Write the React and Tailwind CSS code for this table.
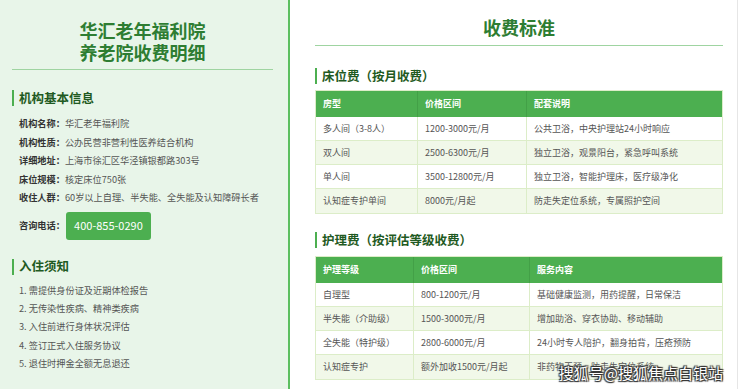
import React from 'react';

const info = [
  ['机构名称：', '华汇老年福利院'],
  ['机构性质：', '公办民营非营利性医养结合机构'],
  ['详细地址：', '上海市徐汇区华泾镇银都路303号'],
  ['床位规模：', '核定床位750张'],
  ['收住人群：', '60岁以上自理、半失能、全失能及认知障碍长者'],
];

const notes = [
  '1. 需提供身份证及近期体检报告',
  '2. 无传染性疾病、精神类疾病',
  '3. 入住前进行身体状况评估',
  '4. 签订正式入住服务协议',
  '5. 退住时押金全额无息退还',
];

const bedFees = {
  cols: ['w-[102px]', 'w-[109px]', ''],
  head: ['房型', '价格区间', '配套说明'],
  rows: [
    ['多人间（3-8人）', '1200-3000元/月', '公共卫浴，中央护理站24小时响应'],
    ['双人间', '2500-6300元/月', '独立卫浴，观景阳台，紧急呼叫系统'],
    ['单人间', '3500-12800元/月', '独立卫浴，智能护理床，医疗级净化'],
    ['认知症专护单间', '8000元/月起', '防走失定位系统，专属照护空间'],
  ],
};

const careFees = {
  cols: ['w-[98px]', 'w-[116px]', ''],
  head: ['护理等级', '价格区间', '服务内容'],
  rows: [
    ['自理型', '800-1200元/月', '基础健康监测，用药提醒，日常保洁'],
    ['半失能（介助级）', '1500-3000元/月', '增加助浴、穿衣协助、移动辅助'],
    ['全失能（特护级）', '2800-6000元/月', '24小时专人陪护，翻身拍背，压疮预防'],
    ['认知症专护', '额外加收1500元/月起', '非药物干预，防走失定位系统'],
  ],
};

function SectionTitle({ children, className = '' }) {
  return (
    <div className={`flex items-center h-[16px] ${className}`}>
      <span className="w-[2px] h-[16px] bg-[#4caf50] mr-[5px]"></span>
      <span className="text-[12.5px] font-bold text-[#1f5a22] leading-none">{children}</span>
    </div>
  );
}

function FeeTable({ data }) {
  return (
    <div className="border border-[#dcedc8] text-[9px]">
      <div className="flex h-[26px] bg-[#4caf50] text-white font-bold">
        {data.head.map((h, i) => (
          <div
            key={i}
            className={`${data.cols[i] || 'flex-1'} flex items-center px-[7px] ${i < 2 ? 'border-r border-[#43a047]' : ''}`}
          >
            {h}
          </div>
        ))}
      </div>
      {data.rows.map((r, ri) => (
        <div
          key={ri}
          className={`flex h-[24px] text-[#555] ${ri % 2 === 1 ? 'bg-[#f1f8e9]' : 'bg-white'} ${ri < 3 ? 'border-b border-[#dcedc8]' : ''}`}
        >
          {r.map((c, i) => (
            <div
              key={i}
              className={`${data.cols[i] || 'flex-1'} flex items-center px-[7px] ${i < 2 ? 'border-r border-[#dcedc8]' : ''}`}
            >
              {c}
            </div>
          ))}
        </div>
      ))}
    </div>
  );
}

export default function App() {
  return (
    <div className="relative w-[740px] h-[389px] flex overflow-hidden bg-white font-['Noto_Sans_CJK_SC','Microsoft_YaHei',sans-serif]">
      {/* left panel */}
      <div className="w-[290px] h-full bg-[#e8f5e9] border-r-2 border-[#5cbf60] pl-[12px] pr-[15px] pt-[19px]">
        <h1 className="text-center text-[18px] leading-[22px] font-bold text-[#2e7d32]">
          <div>华汇老年福利院</div>
          <div>养老院收费明细</div>
        </h1>
        <div className="mt-[6px] h-px bg-[#9fd4a1]"></div>

        <SectionTitle className="mt-[20px]">机构基本信息</SectionTitle>
        <div className="mt-[9px] pl-[7px] text-[9.2px]">
          {info.map(([k, v]) => (
            <div key={k} className="h-[18.5px] flex items-center whitespace-nowrap">
              <span className="font-bold text-[#333]">{k}</span>
              <span className="text-[#555]">{v}</span>
            </div>
          ))}
          <div className="mt-[4px] flex items-center h-[28px]">
            <span className="font-bold text-[#333]">咨询电话：</span>
            <span className="ml-[1px] w-[85px] h-[28px] rounded-[3px] bg-[#4caf50] text-white text-[11px] flex items-center justify-center">
              400-855-0290
            </span>
          </div>
        </div>

        <SectionTitle className="mt-[19px]">入住须知</SectionTitle>
        <div className="mt-[7px] pl-[7px] text-[9.2px] text-[#555]">
          {notes.map((n) => (
            <div key={n} className="h-[18.3px] flex items-center">{n}</div>
          ))}
        </div>
      </div>

      {/* right panel */}
      <div className="flex-1 h-full pl-[25px] pr-[14px] pt-[15px]">
        <h2 className="text-center h-[24px] leading-[24px] text-[18px] font-bold text-[#2e7d32]">收费标准</h2>
        <div className="mt-[6px] h-px bg-[#9fd4a1]"></div>

        <SectionTitle className="mt-[22px]">床位费（按月收费）</SectionTitle>
        <div className="mt-[6px]">
          <FeeTable data={bedFees} />
        </div>

        <SectionTitle className="mt-[18px]">护理费（按评估等级收费）</SectionTitle>
        <div className="mt-[8px]">
          <FeeTable data={careFees} />
        </div>
      </div>
      <div className="w-[3px] h-full border-l border-[#e6e6e6]"></div>

      {/* watermark */}
      <div className="absolute right-[17px] bottom-[7px] text-[15px] leading-[18px] text-white [text-shadow:0_0_1px_#333,1px_1px_1px_#333,-1px_-1px_1px_#333,1px_-1px_1px_#333,-1px_1px_1px_#333]">
        搜狐号@搜狐焦点白银站
      </div>
    </div>
  );
}
